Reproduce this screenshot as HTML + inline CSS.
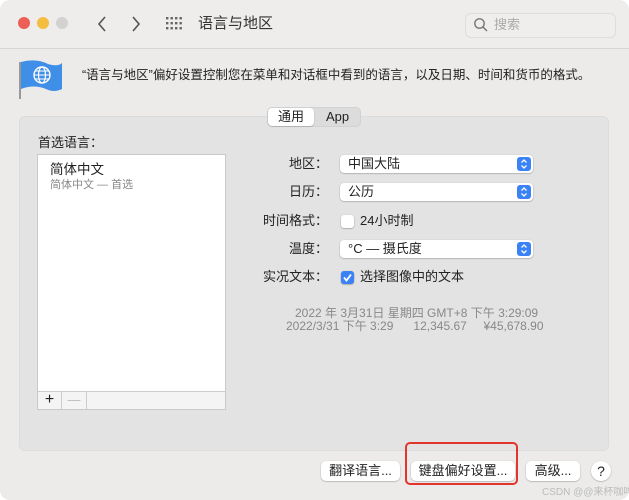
<!DOCTYPE html>
<html><head><meta charset="utf-8"><style>
*{margin:0;padding:0;box-sizing:border-box}
body{width:629px;height:500px;background:#fff;font-family:"Liberation Sans","Noto Sans CJK SC",sans-serif;font-size:13px;color:#222;overflow:hidden;position:relative}
.win{position:absolute;left:0;top:0;width:629px;height:500px;background:#ecebea;border-radius:10px;overflow:hidden}
.tb{position:absolute;left:0;top:0;width:629px;height:49px;background:#eeedec;border-bottom:1px solid #d6d5d4}
.dot{position:absolute;top:17px;width:12px;height:12px;border-radius:50%}
.a{position:absolute;white-space:nowrap;line-height:18px}
.panel{position:absolute;left:19px;top:116px;width:590px;height:335px;background:#e3e3e3;border-radius:6px;border:1px solid #dcdcdc}
.pop{position:absolute;left:340px;width:193px;height:18px;background:#fff;border-radius:4px;box-shadow:0 0.5px 1.5px rgba(0,0,0,.35);font-size:13px;line-height:18px;padding-left:8px}
.pop svg{position:absolute;right:2px;top:2px}
.lab{position:absolute;right:301px;text-align:right;font-size:13px;line-height:18px}
.cb{position:absolute;left:341px;width:13px;height:13px;border-radius:3px;background:#fff;box-shadow:0 0.5px 1.5px rgba(0,0,0,.4)}
.btn{position:absolute;top:461px;height:20px;background:#fff;border-radius:5px;box-shadow:0 0.5px 1.5px rgba(0,0,0,.35);font-size:13px;line-height:20px;text-align:center}
</style></head><body><div class="win">
<div class="tb">
<div class="dot" style="left:18px;background:#ec5f57"></div>
<div class="dot" style="left:37px;background:#f5bd40"></div>
<div class="dot" style="left:56px;background:#d3d2d1"></div>
<svg class="a" style="left:96px;top:15px" width="12" height="18"><path d="M9 2 L3 9 L9 16" stroke="#555" stroke-width="1.6" fill="none"/></svg>
<svg class="a" style="left:130px;top:15px" width="12" height="18"><path d="M3 2 L9 9 L3 16" stroke="#555" stroke-width="1.6" fill="none"/></svg>
<svg class="a" style="left:166px;top:17px" width="16" height="14" fill="#666"><g><rect x="0" y="0" width="2.4" height="2.4"/><rect x="4.5" y="0" width="2.4" height="2.4"/><rect x="9" y="0" width="2.4" height="2.4"/><rect x="13.5" y="0" width="2.4" height="2.4"/><rect x="0" y="5" width="2.4" height="2.4"/><rect x="4.5" y="5" width="2.4" height="2.4"/><rect x="9" y="5" width="2.4" height="2.4"/><rect x="13.5" y="5" width="2.4" height="2.4"/><rect x="0" y="10" width="2.4" height="2.4"/><rect x="4.5" y="10" width="2.4" height="2.4"/><rect x="9" y="10" width="2.4" height="2.4"/><rect x="13.5" y="10" width="2.4" height="2.4"/></g></svg>
<div class="a" style="left:198px;top:15px;font-size:15px;color:#333">语言与地区</div>
<div class="a" style="left:465px;top:13px;width:151px;height:25px;border:1px solid #dedddc;border-radius:6px;background:#efeeed"></div>
<svg class="a" style="left:473px;top:17px" width="16" height="16"><circle cx="6.5" cy="6.5" r="4.7" stroke="#777" stroke-width="1.4" fill="none"/><path d="M10 10 L14 14" stroke="#777" stroke-width="1.5"/></svg>
<div class="a" style="left:494px;top:16px;color:#aaa;font-size:13px">搜索</div>
</div>
<svg class="a" style="left:18px;top:56px" width="46" height="44"><rect x="1" y="6" width="2" height="37" fill="#999"/><path d="M3 6 Q18 2 30 8 Q40 11 44 7 L44 33 Q36 37 28 33 Q16 28 3 33 Z" fill="#3f8ee8"/><circle cx="24" cy="19" r="8" stroke="#fff" stroke-width="1.4" fill="none"/><ellipse cx="24" cy="19" rx="3.5" ry="8" stroke="#fff" stroke-width="1.2" fill="none"/><path d="M16 19 H32 M17.5 15 H30.5 M17.5 23 H30.5" stroke="#fff" stroke-width="1.1"/></svg>
<div class="a" style="left:82px;top:66px;font-size:12.5px;color:#222">“语言与地区”偏好设置控制您在菜单和对话框中看到的语言，以及日期、时间和货币的格式。</div>
<div class="panel"></div>
<div class="a" style="left:267px;top:107px;width:94px;height:20px;background:#dcdcdc;border-radius:5px;border:1px solid #d2d2d2"></div>
<div class="a" style="left:268px;top:108px;width:46px;height:18px;background:#fff;border-radius:4px;box-shadow:0 .5px 1px rgba(0,0,0,.3);text-align:center;line-height:18px">通用</div>
<div class="a" style="left:326px;top:108px;line-height:18px">App</div>
<div class="a" style="left:38px;top:134px">首选语言：</div>
<div class="a" style="left:37px;top:154px;width:189px;height:256px;background:#fff;border:1px solid #c9c9c9"></div>
<div class="a" style="left:50px;top:161px;font-size:13.5px">简体中文</div>
<div class="a" style="left:50px;top:176px;font-size:11px;color:#888">简体中文 — 首选</div>
<div class="a" style="left:38px;top:391px;width:187px;height:18px;background:#f4f4f4;border-top:1px solid #ccc"></div>
<div class="a" style="left:38px;top:391px;width:24px;height:18px;border-right:1px solid #ccc;text-align:center;font-size:16px;line-height:17px">+</div>
<div class="a" style="left:62px;top:391px;width:25px;height:18px;border-right:1px solid #ccc;text-align:center;color:#bbb;line-height:17px">—</div>
<div class="lab" style="top:155px">地区：</div>
<div class="pop" style="top:155px">中国大陆<svg width="14" height="14"><rect width="14" height="14" rx="3" fill="#3b82f6"/><path d="M4.5 5.5 L7 3 L9.5 5.5 M4.5 8.5 L7 11 L9.5 8.5" stroke="#fff" stroke-width="1.3" fill="none"/></svg></div>
<div class="lab" style="top:183px">日历：</div>
<div class="pop" style="top:183px">公历<svg width="14" height="14"><rect width="14" height="14" rx="3" fill="#3b82f6"/><path d="M4.5 5.5 L7 3 L9.5 5.5 M4.5 8.5 L7 11 L9.5 8.5" stroke="#fff" stroke-width="1.3" fill="none"/></svg></div>
<div class="lab" style="top:212px">时间格式：</div>
<div class="cb" style="top:215px"></div>
<div class="a" style="left:360px;top:212px">24小时制</div>
<div class="lab" style="top:240px">温度：</div>
<div class="pop" style="top:240px">°C — 摄氏度<svg width="14" height="14"><rect width="14" height="14" rx="3" fill="#3b82f6"/><path d="M4.5 5.5 L7 3 L9.5 5.5 M4.5 8.5 L7 11 L9.5 8.5" stroke="#fff" stroke-width="1.3" fill="none"/></svg></div>
<div class="lab" style="top:268px">实况文本：</div>
<div class="cb" style="top:271px;background:#3b82f6"><svg width="13" height="13"><path d="M3 6.5 L5.5 9.5 L10 3.5" stroke="#fff" stroke-width="1.8" fill="none"/></svg></div>
<div class="a" style="left:360px;top:268px">选择图像中的文本</div>
<div class="a" style="left:295px;top:304px;font-size:12px;color:#888">2022 年 3月31日 星期四 GMT+8 下午 3:29:09</div>
<div class="a" style="left:286px;top:317px;font-size:12px;color:#888">2022/3/31 下午 3:29&nbsp;&nbsp;&nbsp;&nbsp;&nbsp;&nbsp;12,345.67&nbsp;&nbsp;&nbsp;&nbsp;&nbsp;¥45,678.90</div>
<div class="btn" style="left:321px;width:79px">翻译语言...</div>
<div class="btn" style="left:411px;width:104px">键盘偏好设置...</div>
<div class="btn" style="left:526px;width:54px">高级...</div>
<div class="btn" style="left:591px;width:20px;border-radius:50%;font-size:14px">?</div>
<div class="a" style="left:405px;top:442px;width:113px;height:43px;border:2px solid #e2352b;border-radius:5px"></div>
<div class="a" style="left:542px;top:484px;font-size:10px;color:#bbb">CSDN @@来杯咖啡</div>
</div></body></html>
